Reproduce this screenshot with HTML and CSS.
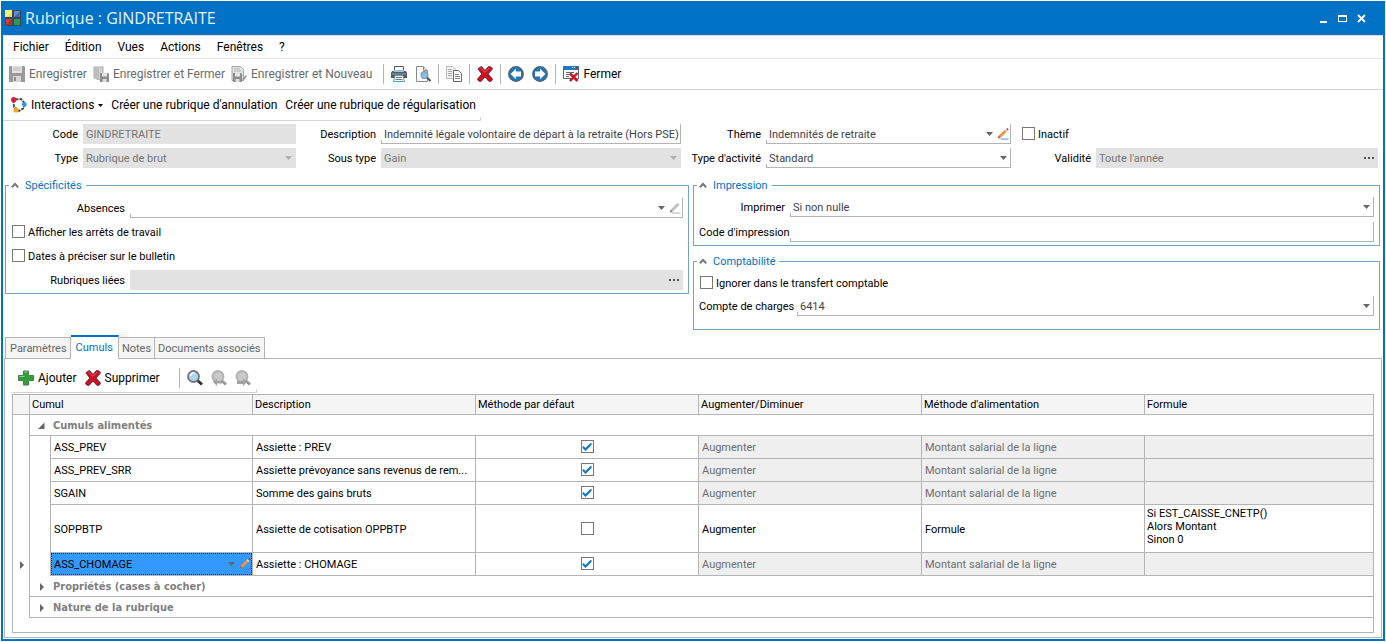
FILE: index.html
```html
<!DOCTYPE html>
<html lang="fr">
<head>
<meta charset="utf-8">
<title>Rubrique : GINDRETRAITE</title>
<link rel="stylesheet" href="styles.css">
</head>
<body>
<svg class="defs" aria-hidden="true">
  <symbol id="arrow" viewBox="0 0 7 4"><path d="M0 0h7L3.500 4z" fill="currentColor"/></symbol>
  <symbol id="caret-up" viewBox="0 0 8 6"><path d="M.8 5.200L4 2l3.200 3.200" fill="none" stroke="#777" stroke-width="2"/></symbol>
  <symbol id="pencil" viewBox="0 0 13 13"><path d="M4 12h8.500" stroke="#2b8fd6"/><path d="M1 11.500l1-3.500 6.500-6 2 2-6 6z" fill="#f0943a"/><path d="M1 11.500l1-3 2 2z" fill="#8a6a50"/><path d="M8 2.500l1.500-1.500 2 2-1.500 1.500z" fill="#d9d4d0"/><path d="M10 1l1.200-1 1.500 1.500-1.200 1.200z" fill="#d8203a"/></symbol>
  <symbol id="pencil-off" viewBox="0 0 13 13"><path d="M3 12h9.500" stroke="#aaa"/><path d="M1 11.500l1-3.500 7-7 2.500 2-7 7z" fill="#c0c0c0"/><path d="M1 11.500l1-3 2 2z" fill="#777"/></symbol>
  <symbol id="cross" viewBox="0 0 16 16"><path d="M2.500 1.500l2-1L8 4.500l3.500-4 2.500.5 1.500 2-4.500 5 4.500 5-1 2-2.500.5L8 11l-4 4.500-2.500-.5-1-2 4.300-5L1 3z" fill="#cc1122" stroke="#5d1a1e" stroke-width=".8"/><path d="M3.500 2L8 6.300 12.300 2" fill="none" stroke="#e4576a"/></symbol>
  <symbol id="floppy" viewBox="0 0 9 9"><path d="M0 0h8l1 1v8H0z" fill="#8d8d8d"/><path d="M2 0h5v3.500H2z" fill="#e4e4e4"/><path d="M2.500 6h4v3h-4z" fill="#ddd"/></symbol>
  <symbol id="lens-off" viewBox="0 0 16 16"><path d="M10.500 10.500l4.500 4" stroke="#999" stroke-width="3"/><circle cx="7" cy="6.500" r="5.500" fill="#c9c9c9" stroke="#b3b3b3" stroke-width="2"/></symbol>
</svg>

<main class="window">
  <header class="titlebar">
    <svg class="icon" viewBox="0 0 16 16"><path d="M0 0h16v16H0z" fill="#3b4560"/><path d="M0 0h7v7H0z" fill="#f2e637"/><path d="M9 1h6v6H9z" fill="#5f8fd0"/><path d="M1 9h6v6H1z" fill="#d8402c"/><path d="M9 9h6v6H9z" fill="#2c9a50"/><path d="M0 0h7v2L2 7H0z" fill="#faf6a0" opacity=".6"/><path d="M9 7l6-6v6z" fill="#2d5c9c" opacity=".6"/><path d="M1 15l6-6v6z" fill="#8c1c18" opacity=".5"/></svg>
    <h1>Rubrique : GINDRETRAITE</h1>
    <div class="window-buttons">
      <button type="button" aria-label="Réduire"><svg viewBox="0 0 9 9"><path d="M1 7h7v2H1z" fill="#fff"/></svg></button>
      <button type="button" aria-label="Agrandir"><svg viewBox="0 0 9 9"><path d="M0 1h9v7H0zM1 3v4h7V3z" fill="#fff" fill-rule="evenodd"/></svg></button>
      <button type="button" aria-label="Fermer la fenêtre"><svg viewBox="0 0 9 9"><path d="M1 1l7 7M8 1L1 8" stroke="#fff" stroke-width="1.800"/></svg></button>
    </div>
  </header>

  <nav class="menubar">
    <button type="button">Fichier</button>
    <button type="button">Édition</button>
    <button type="button">Vues</button>
    <button type="button">Actions</button>
    <button type="button">Fenêtres</button>
    <button type="button">?</button>
  </nav>

  <div class="toolbar toolbar-main">
    <button type="button" disabled><svg class="icon" viewBox="0 0 16 16"><path d="M0 1l1-1h14l1 1v15H0z" fill="#999"/><path d="M3 0h10v7H3z" fill="#e3e3e3"/><path d="M4 2h8M4 4h8" stroke="#bbb"/><path d="M4 10h8v6H4z" fill="#d6d6d6"/><path d="M5 11h2v4H5z" fill="#8f8f8f"/></svg>Enregistrer</button>
    <button type="button" disabled><svg class="icon" viewBox="0 0 16 16"><path d="M1 1h9v13H7l-6-2z" fill="#d4d4d4" stroke="#aaa"/><path d="M1 1l5 2v11l-5-2z" fill="#bcbcbc"/><use href="#floppy" x="7" y="7" width="9" height="9"/></svg>Enregistrer et Fermer</button>
    <button type="button" disabled><svg class="icon" viewBox="0 0 16 16"><path d="M1 .5h8.500L12.500 3.500v11H1z" fill="#e2e2e2" stroke="#a5a5a5"/><path d="M3 3h6M3 5h7" stroke="#b5b5b5"/><use href="#floppy" x="2" y="7" width="9" height="9"/><path d="M11 15l1-3 3-3 1 1-3 4z" fill="#999"/></svg>Enregistrer et Nouveau</button>
    <span class="separator"></span>
    <button type="button" aria-label="Imprimer"><svg class="icon" viewBox="0 0 16 16"><path d="M3.500 5V.500h9V5" fill="#fff" stroke="#555"/><path d="M1 5h14l1 2v5H0V7z" fill="#555b62"/><path d="M3 4h10v2H3z" fill="#8fc4e8"/><path d="M1 8h14" stroke="#9aa0a6"/><path d="M2.500 15.500l1.500-6h8l1.500 6z" fill="#fff" stroke="#4b9bd0"/><path d="M5 11.500h6M4.500 13.500h7" stroke="#777"/></svg></button>
    <button type="button" aria-label="Aperçu"><svg class="icon" viewBox="0 0 16 16"><path d="M1.500 .5h7l4 4v11h-11z" fill="#fafafa" stroke="#8d8d8d"/><path d="M8.500 .5v4h4" fill="#ddd" stroke="#8d8d8d"/><circle cx="9.500" cy="9" r="3.300" fill="#7fc0ec" stroke="#8d9ba6" stroke-width="1.300"/><path d="M12 11.500l3.500 3.500" stroke="#555" stroke-width="2"/></svg></button>
    <span class="separator"></span>
    <button type="button" aria-label="Copier"><svg class="icon" viewBox="0 0 16 16"><path d="M.5 .5H7L10.500 4v8.500H.5z" fill="#f2f2f2" stroke="#bbb"/><path d="M2 3.500h4M2 5.500h4M2 7.500h4M2 9.500h4" stroke="#aaa"/><path d="M7.500 4.500h5l3 3v8h-8z" fill="#fff" stroke="#666"/><path d="M9 8.500h4M9 10.500h5M9 12.500h5" stroke="#888"/></svg></button>
    <span class="separator"></span>
    <button type="button" aria-label="Supprimer la rubrique"><svg class="icon"><use href="#cross"/></svg></button>
    <span class="separator"></span>
    <button type="button" aria-label="Précédent"><svg class="icon" viewBox="0 0 16 16"><circle cx="8" cy="8" r="7.200" fill="#1c78bf" stroke="#4d6475" stroke-width="1.500"/><path d="M2.500 8L8 2.800v2.700h5v5H8v2.700z" fill="#fff"/></svg></button>
    <button type="button" aria-label="Suivant"><svg class="icon" viewBox="0 0 16 16"><circle cx="8" cy="8" r="7.200" fill="#1c78bf" stroke="#4d6475" stroke-width="1.500"/><path d="M13.500 8L8 2.800v2.700H3v5h5v2.700z" fill="#fff"/></svg></button>
    <span class="separator"></span>
    <button type="button"><svg class="icon" viewBox="0 0 16 16"><path d="M.5 1.500h15v11H.5z" fill="#fff" stroke="#666"/><path d="M0 0h16v4H0z" fill="#2379bd"/><path d="M9 1h1v1H9zM11 1h1v1h-1z" fill="#fff"/><path d="M13 1h2v2h-2z" fill="#d01b2c"/><path d="M3 6.500h8M3 8.500h4M3 10.500h3" stroke="#666"/><path d="M7 7.500L14.500 15M14.500 7L7 15" stroke="#c81828" stroke-width="2.500"/></svg>Fermer</button>
  </div>

  <div class="action-row">
    <div class="toolbar toolbar-actions">
      <button type="button"><svg class="icon" viewBox="0 0 16 16"><path d="M4.500 2.500l5.500-.5 3.500 4-.5 5-5 3-5-4-.5-5" fill="none" stroke="#444" stroke-width="1.800" stroke-dasharray="3 1"/><circle cx="2.700" cy="2.700" r="2.600" fill="#e0173c"/><circle cx="13.300" cy="7.500" r="2.400" fill="#2c9be0"/><circle cx="5" cy="13" r="2.600" fill="#f2a51e"/></svg>Interactions<svg class="mini-arrow"><use href="#arrow"/></svg></button>
      <button type="button">Créer une rubrique d'annulation</button>
      <button type="button">Créer une rubrique de régularisation</button>
    </div>
  </div>

  <form class="details">
    <div class="identity">
      <label for="code">Code</label>
      <div class="field off"><input id="code" value="GINDRETRAITE" disabled></div>
      <label for="desc">Description</label>
      <div class="field plain"><input id="desc" value="Indemnité légale volontaire de départ à la retraite (Hors PSE)"></div>
      <label for="theme">Thème</label>
      <div class="field"><select id="theme"><option>Indemnités de retraite</option></select><svg class="arrow"><use href="#arrow"/></svg><button type="button" class="edit" aria-label="Modifier le thème"><svg class="pencil"><use href="#pencil"/></svg></button></div>
      <label class="check inactive"><input type="checkbox"><span>Inactif</span></label>

      <label for="type">Type</label>
      <div class="field off"><select id="type" disabled><option>Rubrique de brut</option></select><svg class="arrow"><use href="#arrow"/></svg></div>
      <label for="subtype">Sous type</label>
      <div class="field off"><select id="subtype" disabled><option>Gain</option></select><svg class="arrow"><use href="#arrow"/></svg></div>
      <label for="activity">Type d'activité</label>
      <div class="field"><select id="activity"><option>Standard</option></select><svg class="arrow"><use href="#arrow"/></svg></div>
      <label for="validity">Validité</label>
      <div class="field off"><input id="validity" value="Toute l'année" disabled><button type="button" class="more" aria-label="Choisir la validité"><i></i><i></i><i></i></button></div>
    </div>

    <div class="groups">
      <fieldset class="specifics">
        <legend><svg class="caret"><use href="#caret-up"/></svg><span>Spécificités</span></legend>
        <div class="line">
          <label for="absences">Absences</label>
          <div class="field"><select id="absences"><option></option></select><svg class="arrow"><use href="#arrow"/></svg><button type="button" class="edit" aria-label="Modifier l'absence" disabled><svg class="pencil"><use href="#pencil-off"/></svg></button></div>
        </div>
        <label class="check"><input type="checkbox"><span>Afficher les arrêts de travail</span></label>
        <label class="check"><input type="checkbox"><span>Dates à préciser sur le bulletin</span></label>
        <div class="line">
          <label for="linked">Rubriques liées</label>
          <div class="field off"><input id="linked" disabled><button type="button" class="more" aria-label="Choisir les rubriques liées"><i></i><i></i><i></i></button></div>
        </div>
      </fieldset>

      <div class="group-column">
        <fieldset class="printing">
          <legend><svg class="caret"><use href="#caret-up"/></svg><span>Impression</span></legend>
          <div class="line">
            <label for="print">Imprimer</label>
            <div class="field"><select id="print"><option>Si non nulle</option></select><svg class="arrow"><use href="#arrow"/></svg></div>
          </div>
          <div class="line">
            <label for="printcode">Code d'impression</label>
            <div class="field"><input id="printcode"></div>
          </div>
        </fieldset>
        <fieldset class="accounting">
          <legend><svg class="caret"><use href="#caret-up"/></svg><span>Comptabilité</span></legend>
          <label class="check"><input type="checkbox"><span>Ignorer dans le transfert comptable</span></label>
          <div class="line">
            <label for="account">Compte de charges</label>
            <div class="field"><select id="account"><option>6414</option></select><svg class="arrow"><use href="#arrow"/></svg></div>
          </div>
        </fieldset>
      </div>
    </div>
  </form>

  <div class="tabs" role="tablist">
    <button type="button" role="tab">Paramètres</button>
    <button type="button" role="tab" class="active" aria-selected="true">Cumuls</button>
    <button type="button" role="tab">Notes</button>
    <button type="button" role="tab">Documents associés</button>
  </div>

  <section class="panel">
    <div class="toolbar toolbar-grid">
      <button type="button"><svg class="icon" viewBox="0 0 16 16"><path d="M5.500 1h5v4.500H15.500v5H10.500V15h-5v-4.500H.5v-5h5z" fill="#2fa03c" stroke="#4a7a50"/><path d="M6.500 2h3M1.500 6.500h5" stroke="#8fd08f"/></svg>Ajouter</button>
      <button type="button"><svg class="icon"><use href="#cross"/></svg>Supprimer</button>
      <span class="separator"></span>
      <button type="button" aria-label="Rechercher"><svg class="icon" viewBox="0 0 16 16"><path d="M10.500 10.500l4.500 4" stroke="#333" stroke-width="3"/><circle cx="6.500" cy="6.500" r="5.500" fill="#a9d6f5" stroke="#777" stroke-width="1.800"/><path d="M3.500 6a3.200 3.200 0 0 1 4-3" stroke="#fff" stroke-width="1.500" fill="none"/></svg></button>
      <button type="button" aria-label="Résultat précédent" disabled><svg class="icon" viewBox="0 0 16 16"><use href="#lens-off"/><path d="M2 12l4-3.500V11h5v2.500H6V16z" fill="#a2a2a2"/></svg></button>
      <button type="button" aria-label="Résultat suivant" disabled><svg class="icon" viewBox="0 0 16 16"><use href="#lens-off"/><path d="M12 12L8 8.500V11H2v3h6v2z" fill="#a2a2a2"/></svg></button>
    </div>

    <div class="grid">
      <table>
        <colgroup><col class="c-mark"><col class="c-indent"><col class="c-cumul"><col class="c-mid"><col class="c-mid"><col class="c-mid"><col class="c-mid"><col class="c-last"></colgroup>
        <thead>
          <tr><th></th><th colspan="2">Cumul</th><th>Description</th><th>Méthode par défaut</th><th>Augmenter/Diminuer</th><th>Méthode d'alimentation</th><th>Formule</th></tr>
        </thead>
        <tbody>
          <tr class="group open"><td class="mark"></td><td colspan="7"><svg class="node" viewBox="0 0 7 7"><path d="M6.500 0v6.500H0z" fill="#666"/></svg>Cumuls alimentés</td></tr>
          <tr><td class="mark"></td><td class="indent"></td><td>ASS_PREV</td><td>Assiette : PREV</td><td class="tick"><input type="checkbox" checked aria-label="Méthode par défaut ASS_PREV"></td><td class="ro">Augmenter</td><td class="ro">Montant salarial de la ligne</td><td class="ro"></td></tr>
          <tr><td class="mark"></td><td class="indent"></td><td>ASS_PREV_SRR</td><td>Assiette prévoyance sans revenus de rem...</td><td class="tick"><input type="checkbox" checked aria-label="Méthode par défaut ASS_PREV_SRR"></td><td class="ro">Augmenter</td><td class="ro">Montant salarial de la ligne</td><td class="ro"></td></tr>
          <tr><td class="mark"></td><td class="indent"></td><td>SGAIN</td><td>Somme des gains bruts</td><td class="tick"><input type="checkbox" checked aria-label="Méthode par défaut SGAIN"></td><td class="ro">Augmenter</td><td class="ro">Montant salarial de la ligne</td><td class="ro"></td></tr>
          <tr class="tall"><td class="mark"></td><td class="indent"></td><td>SOPPBTP</td><td>Assiette de cotisation OPPBTP</td><td class="tick"><input type="checkbox" aria-label="Méthode par défaut SOPPBTP"></td><td>Augmenter</td><td>Formule</td><td class="formula">Si EST_CAISSE_CNETP()<br>Alors Montant<br>Sinon 0</td></tr>
          <tr><td class="mark"><svg class="pointer" viewBox="0 0 4 8"><path d="M0 0l4 4-4 4z" fill="#666"/></svg></td><td class="indent last"></td><td class="selected"><div class="cell-edit"><select aria-label="Cumul"><option>ASS_CHOMAGE</option></select><svg class="arrow"><use href="#arrow"/></svg><button type="button" class="edit" aria-label="Modifier le cumul"><svg class="pencil"><use href="#pencil"/></svg></button></div></td><td>Assiette : CHOMAGE</td><td class="tick"><input type="checkbox" checked aria-label="Méthode par défaut ASS_CHOMAGE"></td><td class="ro">Augmenter</td><td class="ro">Montant salarial de la ligne</td><td class="ro"></td></tr>
          <tr class="group"><td class="mark"></td><td colspan="7"><svg class="node" viewBox="0 0 7 8"><path d="M2 0l4 4-4 4z" fill="#666"/></svg>Propriétés (cases à cocher)</td></tr>
          <tr class="group"><td class="mark"></td><td colspan="7"><svg class="node" viewBox="0 0 7 8"><path d="M2 0l4 4-4 4z" fill="#666"/></svg>Nature de la rubrique</td></tr>
        </tbody>
      </table>
    </div>
  </section>
</main>
</body>
</html>
```
FILE: styles.css
```css
:root {
  --blue: #0072c6;
  --line: #b4b4b4;
  --soft: #dcdcdc;
  --text: "Roboto", "Liberation Sans", sans-serif;
}

* { box-sizing: border-box; }

body {
  margin: 0;
  padding: 1px;
  background: #fff;
  color: #000;
  font: 11px/14px var(--text);
}

button, input, select {
  margin: 0;
  padding: 0;
  border: 0;
  background: none;
  color: inherit;
  font: inherit;
}

.defs { position: absolute; width: 0; height: 0; }
svg { display: block; flex: none; }
.icon { width: 16px; height: 16px; }

.window {
  display: flex;
  flex-direction: column;
  min-height: calc(100vh - 2px);
  border: 2px solid var(--blue);
  border-top: 0;
}

/* Title bar */
.titlebar {
  display: flex;
  align-items: center;
  gap: 4px;
  height: 34px;
  padding: 0 17px 0 2px;
  background: var(--blue);
  color: #e6f2fb;
}
.titlebar h1 { flex: 1; margin: 0; font: 400 16px/20px "Open Sans", sans-serif; }
.window-buttons { display: flex; gap: 10px; }
.window-buttons svg { width: 9px; height: 9px; }

/* Menus and toolbars */
.menubar {
  display: flex;
  gap: 16px;
  height: 24px;
  padding: 0 10px;
  border-top: 1px solid var(--soft);
  border-bottom: 1px solid #e8e8e8;
  font-size: 12px;
}
.toolbar { display: flex; align-items: center; font-size: 12px; gap: 8px; }
.toolbar button { display: flex; align-items: center; gap: 4px; white-space: nowrap; }
.toolbar button:disabled { color: #6a6a6a; }
.toolbar-main { height: 31px; padding: 0 6px; border-bottom: 1px solid #d4d4d4; }
.toolbar-main button:disabled { margin-right: -2px; }
.separator { width: 1px; height: 20px; margin: 0 -1px; background: var(--line); }
.toolbar-main button:disabled + .separator { margin-left: 5px; }

.action-row { display: flex; }
.toolbar-actions {
  position: relative;
  height: 31px;
  padding: 0 5px 0 8px;
  border-bottom: 1px solid #d4d4d4;
}
.toolbar-actions::after, .toolbar-grid::after {
  content: "";
  position: absolute;
  right: 0;
  bottom: 0;
  width: 1px;
  height: 3px;
  background: #d4d4d4;
}
.mini-arrow { width: 5px; height: 3px; }

/* Fields */
.field {
  position: relative;
  display: flex;
  align-items: center;
  min-width: 0;
  height: 20px;
  padding: 0 3px;
  border-right: 1px solid var(--line);
  border-bottom: 1px solid var(--line);
  color: #3c3f4c;
}
.field::before {
  content: "";
  position: absolute;
  left: 0;
  bottom: 0;
  width: 1px;
  height: 3px;
  background: var(--line);
}
.field.plain { padding-right: 0; }
.field.off { border-color: #e2e2e2; background: #e2e2e2; color: #757575; }
.field.off::before { display: none; }
.field input, .field select, .cell-edit select {
  flex: 1;
  min-width: 0;
  height: 100%;
  padding-top: 2px;
  appearance: none;
  opacity: 1;
  outline: 0;
}
.arrow { width: 7px; height: 4px; color: #666; }
.off .arrow { color: #b0b0b0; }
.edit { margin: 0 -2px 0 4px; }
.pencil { width: 12px; height: 12px; }
.more { display: flex; gap: 2px; }
.more i { width: 2px; height: 2px; background: #555; }

input[type="checkbox"] {
  flex: none;
  display: block;
  width: 13px;
  height: 13px;
  border: 1px solid #777;
  background: #fff;
  appearance: none;
}
input[type="checkbox"]:checked::before {
  content: "";
  display: block;
  height: 11px;
  background: #0878d0;
  clip-path: polygon(1px 6px, 2px 5px, 4px 7px, 9px 2px, 10px 2px, 10px 4px, 4px 10px, 1px 7px);
}
.check { display: flex; align-items: center; gap: 3px; height: 19px; margin-bottom: 1px; }
.check span, legend span { padding-top: 2px; }

/* Record form */
.details { padding: 3px 3px 6px 0; }
.identity {
  display: grid;
  grid-template-columns: 80px 213fr 85px 300fr 85px 245fr 85px 282fr;
  row-gap: 4px;
  align-items: center;
  margin-right: 2px;
}
.identity > label:not(.check), .line label {
  padding: 2px 5px 0 0;
  text-align: right;
  white-space: nowrap;
}
.inactive { grid-column: span 2; padding-left: 11px; }

.groups {
  display: grid;
  grid-template-columns: 684fr 687fr;
  gap: 4px;
  align-items: start;
  margin-top: 9px;
  padding-left: 2px;
}
.group-column { display: flex; flex-direction: column; gap: 7px; min-width: 0; }
fieldset {
  display: flex;
  flex-direction: column;
  gap: 4px;
  min-width: 0;
  margin: 0;
  padding: 4px 5px 3px;
  border: 1px solid #76a3c4;
}
legend {
  display: flex;
  align-items: center;
  gap: 6px;
  height: 16px;
  margin-left: -2px;
  padding: 0 4px 0 2px;
  color: var(--blue);
}
.caret { width: 8px; height: 6px; }
.line { display: grid; align-items: center; }
.specifics { padding-top: 5px; }
.specifics .line { grid-template-columns: 119px 1fr; }
.specifics .check, .accounting .check { margin-left: 1px; }
.printing { gap: 5px; }
.printing .line { grid-template-columns: 91px 1fr; }
.accounting .line { grid-template-columns: 98px 1fr; }
.accounting { gap: 3px; padding-bottom: 13px; }

/* Tabs */
.tabs { display: flex; align-items: flex-end; height: 23px; padding-left: 2px; margin-bottom: -1px; }
.tabs button {
  height: 22px;
  padding: 1px 3px 0;
  border: 1px solid var(--line);
  border-left-width: 0;
  background: #f5f5f5;
  color: #666;
}
.tabs button:first-child { padding-left: 4px; border-left-width: 1px; }
.tabs .active {
  z-index: 1;
  height: 24px;
  padding: 0 5px;
  border-top: 2px solid var(--blue);
  border-bottom-color: #fff;
  background: #fff;
  color: var(--blue);
}

.panel {
  flex: 1;
  display: flex;
  flex-direction: column;
  margin: 0 1px 1px;
  padding: 0 7px 4px;
  border: 1px solid var(--line);
}
.toolbar-grid {
  position: relative;
  align-self: flex-start;
  height: 34px;
  margin-bottom: 1px;
  padding: 4px 6px 0;
  border-bottom: 1px solid #d4d4d4;
}
.toolbar-grid .separator { margin-left: 11px; }

/* Accumulator grid */
.grid { flex: 1; border: 1px solid var(--line); }
table { width: 100%; table-layout: fixed; border-collapse: separate; border-spacing: 0; }
.c-mark { width: 17px; }
.c-indent { width: 21px; }
.c-cumul { width: 202px; }
.c-mid { width: 223px; }
.c-last { width: 228px; }
th, td {
  height: 23px;
  padding: 2px 3px 0;
  border: solid var(--line);
  border-width: 0 1px 1px 0;
  overflow: hidden;
  text-align: left;
  font-weight: 400;
  white-space: nowrap;
}
th { height: 20px; padding: 0 2px; background: #f5f5f5; }
th:last-child, td:last-child { border-right: 0; }
.mark, .indent { padding: 0; border-bottom: 0; }
.indent.last { border-bottom-width: 1px; }
.group td { height: 21px; }
.group td:last-child {
  padding: 1px 8px 0;
  color: #808080;
  font: 700 11px/14px "DejaVu Sans Condensed", sans-serif;
}
.open td:last-child { background: linear-gradient(#fff, #fff) left bottom / 21px 1px no-repeat border-box; }
.node { display: inline-block; width: 7px; height: 8px; margin-right: 8px; vertical-align: -1px; }
.pointer { width: 4px; height: 8px; margin-left: 7px; }
.ro { background: #efefef; color: #6e6e6e; }
td.tick { padding: 0 0 1px; }
.tick input { margin: 0 auto; }
.tall td { height: 48px; }
td.formula { padding: 2px; line-height: 13px; vertical-align: top; }
td.selected { padding: 0; }
.cell-edit {
  display: flex;
  align-items: center;
  height: 22px;
  padding: 0 3px;
  outline: 1px dotted #1a2a40;
  outline-offset: -1px;
  background: #3399ff;
}
```
